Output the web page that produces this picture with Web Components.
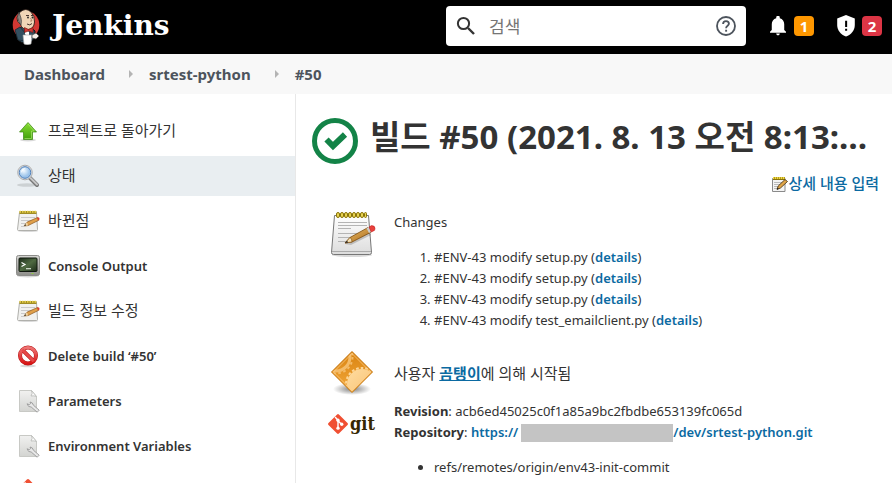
<!DOCTYPE html>
<html lang="ko">
<head>
<meta charset="utf-8">
<title>srtest-python #50 [Jenkins]</title>
<style>
  body {
    margin: 0;
    color: #333;
    background: #fff;
    font-family: "Noto Sans", "Noto Sans CJK KR", sans-serif;
    font-size: 13px;
    line-height: 21px;
    --link: #0b6aa2;
    --ko-size: 15px;
  }
  [lang="ko"]:not(html) { font-size: var(--ko-size); }
  a { color: var(--link); font-weight: 600; text-decoration: none; }
  a.user { text-decoration: underline; }
  ol, ul { margin: 14px 0; padding-left: 40px; }
  p { margin: 0; }
  .masked {
    display: inline-block;
    width: 152px;
    height: 18px;
    margin-left: 3px;
    background: #c4c4c4;
    vertical-align: middle;
  }
</style>
</head>
<body>

<jk-page>
  <jk-header slot="header" alerts="1" warnings="2"></jk-header>
  <jk-breadcrumbs slot="breadcrumbs">
    <jk-crumb>Dashboard</jk-crumb>
    <jk-crumb>srtest-python</jk-crumb>
    <jk-crumb>#50</jk-crumb>
  </jk-breadcrumbs>

  <jk-task slot="tasks" icon="up"><span lang="ko">프로젝트로 돌아가기</span></jk-task>
  <jk-task slot="tasks" icon="search" active><span lang="ko">상태</span></jk-task>
  <jk-task slot="tasks" icon="notepad"><span lang="ko">바뀐점</span></jk-task>
  <jk-task slot="tasks" icon="terminal">Console Output</jk-task>
  <jk-task slot="tasks" icon="notepad"><span lang="ko">빌드 정보 수정</span></jk-task>
  <jk-task slot="tasks" icon="stop">Delete build ‘#50’</jk-task>
  <jk-task slot="tasks" icon="document">Parameters</jk-task>
  <jk-task slot="tasks" icon="document">Environment Variables</jk-task>
  <jk-task slot="tasks" icon="git-mark"></jk-task>

  <jk-build-title>빌드 #50 (2021. 8. 13 오전 8:13:…</jk-build-title>
  <jk-edit-link><span lang="ko">상세 내용 입력</span></jk-edit-link>

  <jk-summary>
    <jk-summary-row icon="notepad-large">
      <p>Changes</p>
      <ol>
        <li>#ENV-43 modify setup.py (<a href="#d1">details</a>)</li>
        <li>#ENV-43 modify setup.py (<a href="#d2">details</a>)</li>
        <li>#ENV-43 modify setup.py (<a href="#d3">details</a>)</li>
        <li>#ENV-43 modify test_emailclient.py (<a href="#d4">details</a>)</li>
      </ol>
    </jk-summary-row>
    <jk-summary-row icon="cause" middle>
      <p lang="ko">사용자 <a class="user" href="#user">곰탱이</a>에 의해 시작됨</p>
    </jk-summary-row>
    <jk-summary-row icon="git-logo">
      <p><b>Revision</b>: acb6ed45025c0f1a85a9bc2fbdbe653139fc065d</p>
      <p><b>Repository</b>: <a href="#repo">https://<span class="masked"></span>/dev/srtest-python.git</a></p>
      <ul>
        <li>refs/remotes/origin/env43-init-commit</li>
      </ul>
    </jk-summary-row>
  </jk-summary>
</jk-page>

<script>
const NOTEPAD = `
  <defs>
    <linearGradient id="paper" x1="0" y1="0" x2="0" y2="1"><stop offset="0" stop-color="#fff"/><stop offset="1" stop-color="#dcdcdc"/></linearGradient>
    <linearGradient id="wood" x1="0" y1="0" x2="1" y2="1"><stop offset="0" stop-color="#f0c36a"/><stop offset="1" stop-color="#a8681c"/></linearGradient>
  </defs>
  <ellipse cx="24" cy="45" rx="20" ry="2" fill="#000" opacity=".15"/>
  <path d="M6.500 5.500h34l3 37q0 2-2 2h-36q-2 0-2-2z" fill="url(#paper)" stroke="#777" />
  <path d="M4 41.500h39" stroke="#aaa"/>
  <path d="M10 12.500h29M10 15.500h29M10 18.500h13M10 23.500h24M10 27.500h18M10 31.500h10" stroke="#b4b4b4"/>
  <g fill="#e8d452" stroke="#8a7409">
    <rect x="8.500" y="2.500" width="3" height="5" rx="1.500"/><rect x="12.500" y="2.500" width="3" height="5" rx="1.500"/>
    <rect x="16.500" y="2.500" width="3" height="5" rx="1.500"/><rect x="20.500" y="2.500" width="3" height="5" rx="1.500"/>
    <rect x="24.500" y="2.500" width="3" height="5" rx="1.500"/><rect x="28.500" y="2.500" width="3" height="5" rx="1.500"/>
    <rect x="32.500" y="2.500" width="3" height="5" rx="1.500"/><rect x="36.500" y="2.500" width="2" height="5" rx="1"/>
  </g>
  <path d="M17 34l6 1 20-10-2-3z" opacity=".18"/>
  <path d="M17 33l5-5.500L40 17.500l2.500 5L24 32z" fill="url(#wood)" stroke="#7a4a0c" stroke-width=".8"/>
  <path d="M17 33l5-5.500q2 1 2 4.500z" fill="#f3dfb4" stroke="#7a4a0c" stroke-width=".6"/>
  <path d="M17 33l2-2.300 1.200 1.700z" fill="#222"/>
  <path d="M38.500 18.300l2.500-1.300 2.500 4.500-2.500 1.500z" fill="#ccc"/>
  <path d="M41 17l2.500-1.400q3.500 0 3.500 2.700t-1.500 2.600l-2.300 1.200z" fill="#e8413c" stroke="#b11" stroke-width=".5"/>`;

const SMALL_NOTEPAD = `
  <ellipse cx="12" cy="22" rx="10" ry="1" opacity=".15"/>
  <path d="M3.500 3.500h17l1 17q0 1-1 1h-18q-1 0-1-1z" fill="#f1f1ef" stroke="#b0b0ac"/>
  <path d="M5 8.500h14M5 11.500h11M5 14.500h6M5 17.500h3" stroke="#cacaca"/>
  <path d="M3.500 3.500h17" stroke="#a08d25" stroke-width="3"/>
  <path d="M3.500 2.700h17" stroke="#e6cf4c" stroke-width="2" stroke-dasharray="1.500 1"/>
  <path d="M8 17l3-3.800L21.500 8.500l1.200 2.800L12 16.600z" fill="#e0a04a" stroke="#8a5217" stroke-width=".7"/>
  <path d="M8 17l3-3.800 1 3.200z" fill="#f0d8aa"/><path d="M8 17l1.400-1.700.8 1.300z" fill="#222"/>
  <path d="M21 8.800l1.200-.6q1.700.4 1.300 2.400l-1.400.8z" fill="#dc3d30"/>`;

const GIT_MARK = `
  <path d="M10.900.6q1.100-1.100 2.200 0l10.300 10.300q1.100 1.100 0 2.200L13.100 23.400q-1.100 1.100-2.200 0L.6 13.100q-1.100-1.100 0-2.200z" fill="#f05033"/>
  <path d="M8.500 3.500l3.500 4v9.500M12 8l4.500 4.500" fill="none" stroke="#fff" stroke-width="1.700"/>
  <g fill="#fff"><circle cx="12" cy="7.500" r="2"/><circle cx="12" cy="17" r="2"/><circle cx="16.500" cy="12.300" r="2"/></g>`;

// name: [viewBox, markup]
const ICONS = {
  up: ["0 0 24 24", `
    <defs><linearGradient id="g" x1="0" y1="0" x2="0" y2="1"><stop offset="0" stop-color="#8ade35"/><stop offset="1" stop-color="#3f9f0a"/></linearGradient></defs>
    <ellipse cx="12" cy="21" rx="8" ry="1.500" opacity=".15"/>
    <path d="M12 3.500L20.500 13H16.500v7.500h-9V13h-4z" fill="url(#g)" stroke="#3a8710" stroke-width=".7"/>
    <path d="M12 5l6.300 7H15.500v7.500h-7" fill="none" stroke="#b5ef7a" opacity=".6"/>`],
  search: ["0 0 24 24", `
    <defs><radialGradient id="g" cx=".4" cy=".35"><stop offset="0" stop-color="#f3faff"/><stop offset="1" stop-color="#9bc3ea"/></radialGradient></defs>
    <ellipse cx="11" cy="21" rx="10" ry="1.800" opacity=".12"/>
    <path d="M14 14l7 7" stroke="#777" stroke-width="4" stroke-linecap="round"/>
    <path d="M14.500 14l6.500 6.500" stroke="#c6c6c6" stroke-width="2" stroke-linecap="round"/>
    <circle cx="9" cy="8.500" r="7.300" fill="#e9e9e9" stroke="#9d9d9d" stroke-width=".8"/>
    <circle cx="9" cy="8.500" r="5.800" fill="url(#g)" stroke="#4b7db8"/>
    <path d="M5 9q0-5 5-5.300Q7 6 5 9z" fill="#fff" opacity=".8"/>`],
  notepad: ["0 0 24 24", SMALL_NOTEPAD],
  "notepad-large": ["0 0 48 48", NOTEPAD],
  edit: ["0 0 16 16", `
    <path d="M.5 2.500h12.500v13H.5z" fill="#f4f4f4" stroke="#8a8a8a"/>
    <path d="M2 6.500h9M2 8.500h7M2 10.500h5M2 12.500h4" stroke="#bbb"/>
    <path d="M1 2.500h12" stroke="#8a7409" stroke-width="3"/><path d="M1 2h12" stroke="#f1d843" stroke-width="2" stroke-dasharray="1.400 .6"/>
    <path d="M5 13.500l1.200-3.500L13 3.500l2.500 2L8.500 12z" fill="#e0a548" stroke="#3c2a0c" stroke-width=".8"/>
    <path d="M5 13.500l.5-1.800 1.300 1z" fill="#111"/>`],
  terminal: ["0 0 24 24", `
    <defs>
      <linearGradient id="g" x1="0" y1="0" x2="0" y2="1"><stop offset="0" stop-color="#d6d6d3"/><stop offset="1" stop-color="#8e8e8a"/></linearGradient>
      <linearGradient id="s" x1="0" y1="0" x2="1" y2="1"><stop offset="0" stop-color="#1d2c1b"/><stop offset=".5" stop-color="#4f6a42"/><stop offset="1" stop-color="#1c2b19"/></linearGradient>
    </defs>
    <ellipse cx="12" cy="22" rx="11" ry="1.500" opacity=".15"/>
    <rect x=".5" y="1.500" width="23" height="20" rx="2" fill="url(#g)" stroke="#8d8d8a"/>
    <rect x="3" y="4" width="18" height="13.500" rx="1" fill="url(#s)" stroke="#10180f"/>
    <path d="M5.500 8.500l3.500 2-3.500 2" fill="none" stroke="#fff" stroke-width="1.200"/><path d="M10 14.700h5" stroke="#d8e2d4" stroke-width="1.200"/>
    <rect x="15.500" y="19" width="2" height="1" fill="#8fd13a"/>`],
  stop: ["0 0 24 24", `
    <defs><linearGradient id="g" x1="0" y1="0" x2="0" y2="1"><stop offset="0" stop-color="#ee7474"/><stop offset="1" stop-color="#d81616"/></linearGradient></defs>
    <ellipse cx="12" cy="22" rx="8" ry="1.300" opacity=".15"/>
    <circle cx="12" cy="11.500" r="8" fill="#fff" stroke="#b81616" stroke-width="4"/>
    <path d="M6.300 5.800l11.400 11.400" stroke="#b81616" stroke-width="3.800"/>
    <circle cx="12" cy="11.500" r="8" fill="none" stroke="url(#g)" stroke-width="3"/>
    <path d="M6.300 5.800l11.400 11.400" stroke="#e64949" stroke-width="2.800"/>`],
  document: ["0 0 24 24", `
    <defs><linearGradient id="g" x1="0" y1="0" x2="0" y2="1"><stop offset="0" stop-color="#f1f1f0"/><stop offset="1" stop-color="#d3d4d1"/></linearGradient></defs>
    <path d="M3.500 1.500h12l5 6v15h-17z" fill="url(#g)" stroke="#c8c9c5"/>
    <path d="M15.500 1.500q1.500 3-.5 5.500 3-.5 5.500.5z" fill="#fbfbfb" stroke="#b8b9b5" stroke-width=".8"/>
    <path d="M14 13q2.800.3 3.400 3.200l5.800 5-2 2-6-5.200q-3 .5-4.200-3.200l2.300.9 1.400-1.200z" fill="#e8e8e8" stroke="#999" stroke-width=".9"/>`],
  cause: ["0 0 48 48", `
    <defs>
      <linearGradient id="g" x1="0" y1="0" x2="0" y2="1"><stop offset="0" stop-color="#d98310"/><stop offset="1" stop-color="#f3a93c"/></linearGradient>
      <linearGradient id="l" x1="0" y1="0" x2="1" y2="1"><stop offset="0" stop-color="#ffdca0"/><stop offset="1" stop-color="#f6bd6c"/></linearGradient>
      <radialGradient id="sh"><stop offset="0" stop-opacity=".5"/><stop offset="1" stop-opacity="0"/></radialGradient>
      <clipPath id="c"><path d="M24 4.500L43.500 24 24 43.500 4.500 24z"/></clipPath>
    </defs>
    <ellipse cx="24" cy="41" rx="19" ry="6" fill="url(#sh)"/>
    <path d="M24 3.500L44.500 24 24 44.500 3.500 24z" fill="url(#g)" stroke="#c4750e"/>
    <g clip-path="url(#c)">
      <circle cx="8" cy="9" r="16.500" fill="none" stroke="#f4bb68" stroke-width="2" stroke-dasharray="2.600 2.600"/>
      <circle cx="8" cy="9" r="14" fill="none" stroke="#f4bb68" stroke-width="3"/>
      <circle cx="34" cy="36" r="16" fill="none" stroke="#fdd596" stroke-width="2" stroke-dasharray="2.600 2"/>
      <circle cx="34" cy="36" r="15" fill="url(#l)"/>
    </g>
    <path d="M24 5.500L42.500 24 24 42.500 5.500 24z" fill="none" stroke="#ffcf8a" opacity=".7"/>`],
  "git-mark": ["0 0 24 24", GIT_MARK],
  "git-logo": ["0 0 48 48", `
    <svg y="15" width="20" height="20" viewBox="0 0 24 24">${GIT_MARK}</svg>
    <text x="22" y="31" font-family="DejaVu Serif Condensed, DejaVu Serif, serif" font-weight="700" font-size="18" fill="#362701">git</text>`],
  success: ["0 0 48 48", `
    <circle cx="23" cy="24" r="20.500" fill="none" stroke="#138347" stroke-width="5"/>
    <path d="M14.500 22.500l6.500 6.500 12-11.500" fill="none" stroke="#138347" stroke-width="6"/>`],
  magnifier: ["2 2 20 20", `
    <circle cx="9.500" cy="9.500" r="5.600" fill="none" stroke="#333" stroke-width="2"/><path d="M14 14l6 6" stroke="#333" stroke-width="2.400"/>`],
  help: ["0 0 24 24", `
    <circle cx="12" cy="12" r="10.800" fill="none" stroke="#4d545d" stroke-width="2.200"/>
    <path d="M8.500 9.700q0-3.500 3.500-3.500t3.500 3.200c0 2.300-3.400 2.400-3.400 5.200" fill="none" stroke="#4d545d" stroke-width="2.200"/><path d="M11 16.500h2.300v2.300H11z" fill="#4d545d"/>`],
  bell: ["3 2 18 21", `
    <path d="M12 23c1.100 0 2-.9 2-2h-4c0 1.100.9 2 2 2zm7-6v-6.500c0-3.300-1.800-6-5-6.800V3a2 2 0 0 0-4 0v.7c-3.200.8-5 3.500-5 6.800V17l-2 2v1h18v-1z" fill="#fff"/>`],
  shield: ["2 0 20 25", `
    <path d="M12 0L2 4v7.500C2 17.500 6 22.500 12 24.500c6-2 10-7 10-13V4z" fill="#fff"/><path d="M11 6.500h2.300v7H11zM11 15.500h2.300v2.500H11z" fill="#000"/>`],
  butler: ["0 0 28 38", `
    <ellipse cx="14" cy="18" rx="13.300" ry="14" fill="#d33833"/>
    <path d="M5 24q-1 8 2 10 6 4 12 1 4-3 4-11l-5-4H9z" fill="#335061" stroke="#111"/>
    <path d="M3 23l5-3 6 7-1 7-7-1z" fill="#335061" stroke="#1c2b35" stroke-width=".8"/>
    <path d="M8 5q6-5 11 0 4 4 3.500 10-.5 7-6.500 7.500-6 0-7.500-5-4-3-3.500-7z" fill="#f0d6b7" stroke="#2a1d18" stroke-width=".9"/>
    <path d="M7 5q-3 5 0 10l2 3q1-4 0-7z" fill="#8b8680" stroke="#333" stroke-width=".6"/>
    <path d="M14 8.500h3M19 8.500h2.500M15 17q3 2 5-.5" fill="none" stroke="#4a3730"/>
    <circle cx="16" cy="10.500" r=".9" fill="#222"/><circle cx="20.500" cy="10.500" r=".9" fill="#222"/>
    <path d="M18.500 11l1.500 3h-2" fill="none" stroke="#a6785c" stroke-width=".8"/>
    <path d="M13 22l4 3v8l-4-6z" fill="#fff"/>
    <path d="M12.500 20.500l4 2 4.500-2v5l-4.500-1.500-4 1.500z" fill="#d33833" stroke="#751611" stroke-width=".6"/>
    <path d="M11 28h9l-1 9q-4 1.500-7 0z" fill="#fff" stroke="#aaa" stroke-width=".6"/>
    <path d="M20 28l4-2 3 3-3 3-4-1z" fill="#f4f0e8" stroke="#444" stroke-width=".7"/>`],
};

class JkElement extends HTMLElement {
  connectedCallback() {
    if (!this.shadowRoot) this.attachShadow({ mode: "open" });
    this.shadowRoot.innerHTML = `<style>* { box-sizing: border-box; }${this.css()}</style>${this.html()}`;
  }
}

/** <jk-icon name="..."> — sized by --icon-w / --icon-h */
class JkIcon extends JkElement {
  css() {
    return `
      :host { display: block; flex: none; width: var(--icon-w, 24px); height: var(--icon-h, var(--icon-w, 24px)); }
      svg { display: block; width: 100%; height: 100%; }
      svg svg { width: 20px; height: 20px; }
    `;
  }
  html() {
    const [box, markup] = ICONS[this.getAttribute("name")];
    return `<svg viewBox="${box}" aria-hidden="true">${markup}</svg>`;
  }
}

class JkPage extends JkElement {
  css() {
    return `
      :host { display: flex; flex-direction: column; height: 100vh; overflow: hidden; }
      .body { flex: 1; display: flex; min-height: 0; }
      nav { flex: 0 0 296px; display: flex; flex-direction: column; gap: 5px; padding-top: 17px; border-right: 1px solid #e8e8e8; }
      main { flex: 1; min-width: 0; padding: 20px 13px 0 16px; }
    `;
  }
  html() {
    return `
      <slot name="header"></slot>
      <slot name="breadcrumbs"></slot>
      <div class="body">
        <nav><slot name="tasks"></slot></nav>
        <main><slot></slot></main>
      </div>
    `;
  }
}

class JkHeader extends JkElement {
  css() {
    return `
      :host { display: block; flex: none; background: #000; }
      header { display: flex; align-items: center; height: 54px; padding: 0 10px 2px 12px; }
      .logo { display: flex; align-items: center; gap: 12px; margin-right: auto; color: #fff;
        font: 700 28px/36px "DejaVu Serif", serif; text-decoration: none; }
      .logo jk-icon { --icon-w: 28px; --icon-h: 38px; }
      form { display: flex; align-items: center; width: 300px; height: 40px; padding: 0 10px; background: #fff; border-radius: 4px; }
      form jk-icon { --icon-w: 20px; }
      input { flex: 1; min-width: 0; margin: 0 0 0 13px; padding: 0; border: 0; outline: 0; background: none; font: inherit; font-size: 17px; color: #333; }
      input::placeholder { color: #757575; opacity: 1; }
      button { display: flex; align-items: center; margin: 0; padding: 0; border: 0; background: none; cursor: pointer; font: inherit; }
      .bell { margin: 0 23px 0 24px; gap: 8px; --icon-w: 16px; --icon-h: 20px; }
      .shield { gap: 7px; --icon-w: 18px; --icon-h: 22px; }
      .badge { width: 20px; height: 20px; border-radius: 4px; color: #fff; font-weight: 700; font-size: 15px; line-height: 20px; text-align: center; }
      .alert { background: #fe9700; }
      .warn { background: #dc3545; }
    `;
  }
  html() {
    return `
      <header>
        <a class="logo" href="#home"><jk-icon name="butler"></jk-icon>Jenkins</a>
        <form role="search">
          <jk-icon name="magnifier"></jk-icon>
          <input type="text" aria-label="검색" placeholder="검색">
          <button type="button" aria-label="도움말"><jk-icon name="help"></jk-icon></button>
        </form>
        <button class="bell"><jk-icon name="bell"></jk-icon><span class="badge alert">${this.getAttribute("alerts")}</span></button>
        <button class="shield"><jk-icon name="shield"></jk-icon><span class="badge warn">${this.getAttribute("warnings")}</span></button>
      </header>
    `;
  }
}

class JkBreadcrumbs extends JkElement {
  css() {
    return `:host { display: flex; flex: none; align-items: center; height: 40px; padding-left: 24px; background: #f8f8f8; }`;
  }
  html() { return `<slot></slot>`; }
}

class JkCrumb extends JkElement {
  css() {
    return `
      :host { display: flex; align-items: center; }
      a { color: #4d545d; font-size: 15px; font-weight: 700; text-decoration: none; }
      :host(:not(:last-child))::after { content: ""; margin: 0 16px 0 24px; border: 4px solid transparent; border-left-color: #b4b4b4; border-right: 0; }
    `;
  }
  html() { return `<a href="#"><slot></slot></a>`; }
}

class JkTask extends JkElement {
  css() {
    return `
      :host { display: block; flex: none; }
      a { display: flex; align-items: center; gap: 8px; height: 40px; padding-left: 16px; color: #333; font-weight: 600; text-decoration: none; }
      :host([active]) a { background: #e9eef1; }
      ::slotted([lang="ko"]) { font-weight: 400; }
    `;
  }
  html() {
    return `<a href="#"><jk-icon name="${this.getAttribute("icon")}"></jk-icon><span><slot></slot></span></a>`;
  }
}

class JkBuildTitle extends JkElement {
  css() {
    return `
      :host { display: flex; align-items: flex-start; gap: 10px; --icon-w: 48px; }
      jk-icon { margin-top: 3px; }
      h1 { min-width: 0; margin: 0; overflow: hidden; font-size: 33px; line-height: 46px; font-weight: 700; white-space: nowrap; text-overflow: ellipsis; }
    `;
  }
  html() { return `<jk-icon name="success"></jk-icon><h1><slot></slot></h1>`; }
}

class JkEditLink extends JkElement {
  css() {
    return `
      :host { display: flex; justify-content: flex-end; margin-top: 8px; --icon-w: 16px; }
      a { display: flex; align-items: center; color: var(--link); font-weight: 500; text-decoration: none; }
    `;
  }
  html() { return `<a href="#"><jk-icon name="edit"></jk-icon><slot></slot></a>`; }
}

class JkSummary extends JkElement {
  css() {
    return `:host { display: flex; flex-direction: column; gap: 3px; padding: 16px 0 0 16px; }`;
  }
  html() { return `<slot></slot>`; }
}

class JkSummaryRow extends JkElement {
  css() {
    return `
      :host { display: grid; grid-template-columns: 48px 1fr; column-gap: 18px; --icon-w: 48px; }
      .content { min-width: 0; padding-top: 2px; }
      :host([middle]) .content { align-self: center; }
    `;
  }
  html() {
    return `<jk-icon name="${this.getAttribute("icon")}"></jk-icon><div class="content"><slot></slot></div>`;
  }
}

customElements.define("jk-icon", JkIcon);
customElements.define("jk-page", JkPage);
customElements.define("jk-header", JkHeader);
customElements.define("jk-breadcrumbs", JkBreadcrumbs);
customElements.define("jk-crumb", JkCrumb);
customElements.define("jk-task", JkTask);
customElements.define("jk-build-title", JkBuildTitle);
customElements.define("jk-edit-link", JkEditLink);
customElements.define("jk-summary", JkSummary);
customElements.define("jk-summary-row", JkSummaryRow);
</script>
</body>
</html>
